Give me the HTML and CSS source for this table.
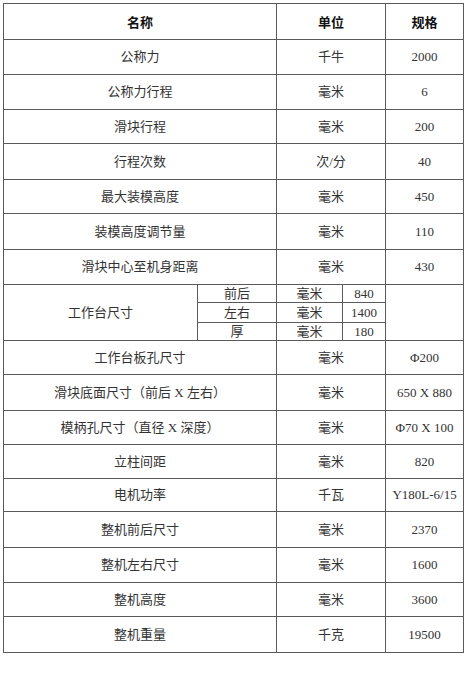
FILE: index.html
```html
<!DOCTYPE html>
<html lang="zh-CN">
<head>
<meta charset="utf-8">
<title>参数表</title>
<link rel="stylesheet" href="styles.css">
</head>
<body>
<table class="spec">
  <colgroup>
    <col class="c1"><col class="c2"><col class="c3"><col class="c4"><col class="c5">
  </colgroup>
  <thead>
    <tr class="h36"><th colspan="2">名称</th><th colspan="2">单位</th><th>规格</th></tr>
  </thead>
  <tbody>
    <tr class="h35"><td colspan="2">公称力</td><td colspan="2">千牛</td><td>2000</td></tr>
    <tr class="h35"><td colspan="2">公称力行程</td><td colspan="2">毫米</td><td>6</td></tr>
    <tr class="h34"><td colspan="2">滑块行程</td><td colspan="2">毫米</td><td>200</td></tr>
    <tr class="h36"><td colspan="2">行程次数</td><td colspan="2">次/分</td><td>40</td></tr>
    <tr class="h34"><td colspan="2">最大装模高度</td><td colspan="2">毫米</td><td>450</td></tr>
    <tr class="h36"><td colspan="2">装模高度调节量</td><td colspan="2">毫米</td><td>110</td></tr>
    <tr class="h35"><td colspan="2">滑块中心至机身距离</td><td colspan="2">毫米</td><td>430</td></tr>
    <tr class="s18"><td rowspan="3">工作台尺寸</td><td class="sub">前后</td><td class="sub">毫米</td><td class="sub">840</td><td rowspan="3"></td></tr>
    <tr class="s20"><td class="sub">左右</td><td class="sub">毫米</td><td class="sub">1400</td></tr>
    <tr class="s18"><td class="sub">厚</td><td class="sub">毫米</td><td class="sub">180</td></tr>
    <tr class="h34"><td colspan="2">工作台板孔尺寸</td><td colspan="2">毫米</td><td>Φ200</td></tr>
    <tr class="h36"><td colspan="2">滑块底面尺寸（前后 X 左右）</td><td colspan="2">毫米</td><td>650 X 880</td></tr>
    <tr class="h34"><td colspan="2">模柄孔尺寸（直径 X 深度）</td><td colspan="2">毫米</td><td>Φ70 X 100</td></tr>
    <tr class="h34"><td colspan="2">立柱间距</td><td colspan="2">毫米</td><td>820</td></tr>
    <tr class="h33"><td colspan="2">电机功率</td><td colspan="2">千瓦</td><td>Y180L-6/15</td></tr>
    <tr class="h36"><td colspan="2">整机前后尺寸</td><td colspan="2">毫米</td><td>2370</td></tr>
    <tr class="h35"><td colspan="2">整机左右尺寸</td><td colspan="2">毫米</td><td>1600</td></tr>
    <tr class="h34"><td colspan="2">整机高度</td><td colspan="2">毫米</td><td>3600</td></tr>
    <tr class="h36"><td colspan="2">整机重量</td><td colspan="2">千克</td><td>19500</td></tr>
  </tbody>
</table>
</body>
</html>
```
FILE: styles.css
```css
html, body {
  margin: 0;
  padding: 0;
  background: #ffffff;
}

body {
  padding: 3px 0 0 3px;
}

.spec {
  border-collapse: collapse;
  table-layout: fixed;
  width: 460px;
  font-family: "Liberation Serif", "Noto Sans CJK SC", serif;
  font-size: 13px;
  color: #333333;
}

.c1 { width: 194px; }
.c2 { width: 79px; }
.c3 { width: 66px; }
.c4 { width: 43px; }
.c5 { width: 78px; }

.spec th,
.spec td {
  border: 1px solid #5a5a5a;
  padding: 0;
  text-align: center;
  vertical-align: middle;
  line-height: 16px;
  white-space: nowrap;
  overflow: hidden;
}

.spec th {
  font-family: "Noto Sans CJK SC", sans-serif;
  font-weight: bold;
  color: #111111;
  font-size: 13px;
}

.spec td.sub {
  line-height: 14px;
}

.h33 { height: 33px; }
.h34 { height: 34px; }
.h35 { height: 35px; }
.h36 { height: 36px; }
.s18 { height: 18px; }
.s20 { height: 20px; }
```
